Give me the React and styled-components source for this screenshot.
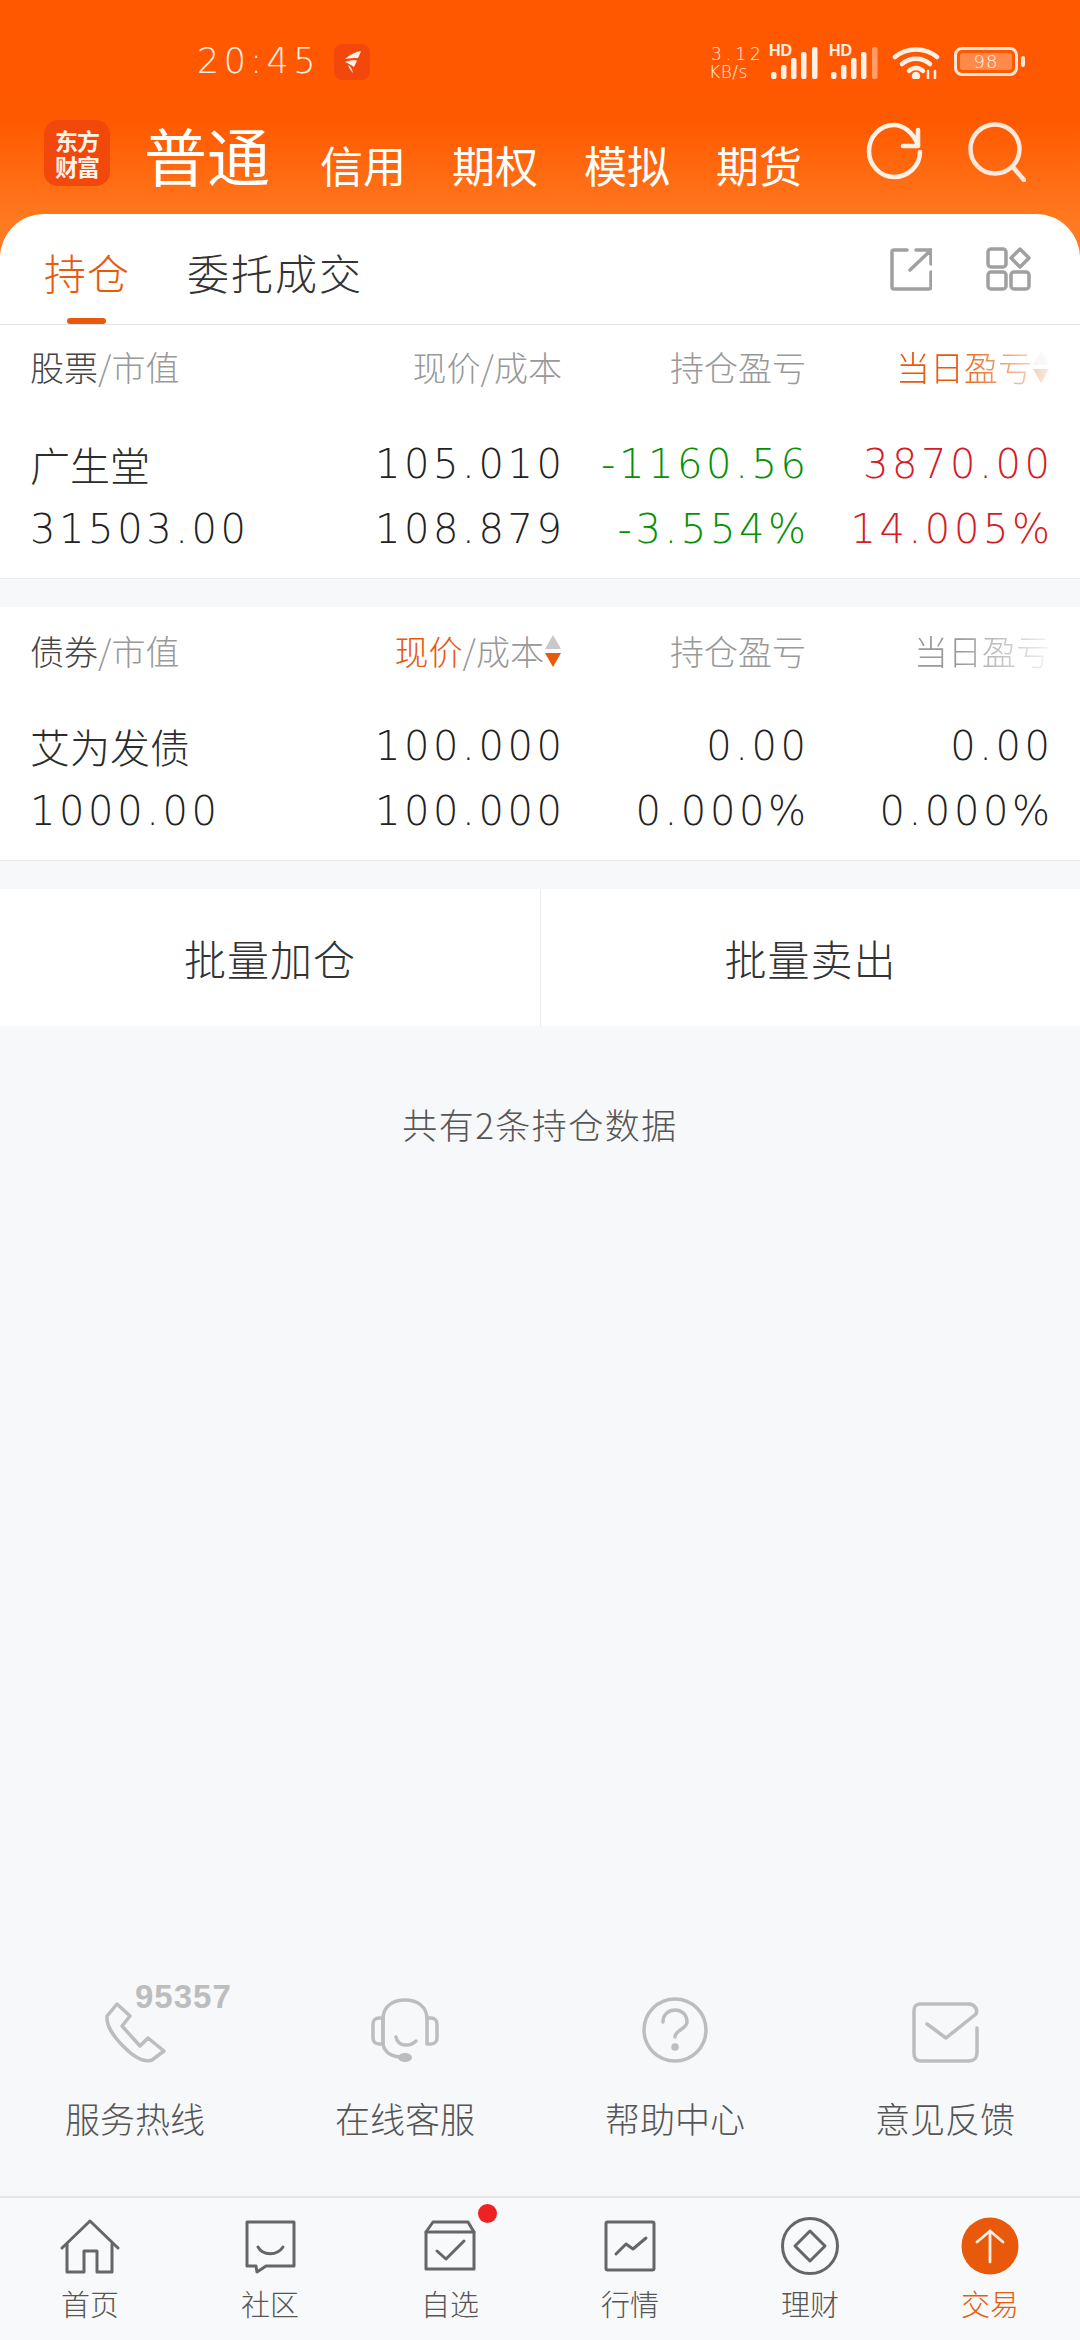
import React from 'react';
import styled, { createGlobalStyle } from 'styled-components';

const Global = createGlobalStyle`
  html, body { margin: 0; padding: 0; background: #f6f7f9; }
  body { font-family: "Noto Sans CJK SC", "Noto Sans", sans-serif; font-weight: 300; }
  * { box-sizing: border-box; }
`;

const NUM = '"DejaVu Sans", "Noto Sans CJK SC", sans-serif';

const Page = styled.div`
  width: 1080px; height: 2340px; display: flex; flex-direction: column; background: #f7f8fa; overflow: hidden;
`;
const Top = styled.div`
  background: linear-gradient(180deg, #ff5800 0, #ff5900 120px, #ff7a20 224px, #ff7a20 100%);
`;
const StatusBar = styled.div`
  height: 106px; display: flex; align-items: flex-start; padding: 44px 62px 0 197px; color: #fff0e6;
`;
const Clock = styled.div`
  font-family: ${NUM}; font-weight: 200; font-size: 35px; line-height: 34px; letter-spacing: 4.4px; width: 137px; white-space: nowrap;
`;
const AppDot = styled.div`
  width: 36px; height: 36px; border-radius: 8px; background: #f2480c; display: flex; align-items: center; justify-content: center;
`;
const StatusRight = styled.div`
  margin-left: auto; display: flex; align-items: flex-start;
`;
const Speed = styled.div`
  width: 60px; display: flex; flex-direction: column; font-family: ${NUM}; font-weight: 200; font-size: 17px; line-height: 18px; margin-top: 1px;
`;
const SpeedValue = styled.span`
  letter-spacing: 4px; padding-left: 2px; white-space: nowrap;
`;
const SpeedUnit = styled.span`
  letter-spacing: 0.5px;
`;
const Signal = styled.div`
  position: relative; width: 60px; height: 34px; margin-top: 2px;
`;
const Hd = styled.span`
  position: absolute; left: 0; top: -3px; font: 700 16px/16px "Liberation Sans", sans-serif; color: #fff0e6;
`;
const BarsSvg = styled.svg`
  position: absolute; left: 1px; top: 1px;
`;
const Wifi = styled.svg`
  margin: 3px 0 0 3px;
`;
const Battery = styled.div`
  margin-left: 14px; margin-top: 3px; width: 64px; height: 29px; border: 3px solid #ffe6d6; border-radius: 8px; padding: 3px; position: relative;
  &::after { content: ""; position: absolute; right: -10px; top: 6px; width: 4px; height: 11px; background: #ffe6d6; border-radius: 2px; }
`;
const BatteryFill = styled.div`
  height: 100%; background: #ff8a4a; border-radius: 3px; font-family: ${NUM}; font-weight: 200; font-size: 18px; line-height: 17px; letter-spacing: 1px; color: #fff0e6; text-align: center;
`;
const NavRow = styled.div`
  height: 108px; display: flex; align-items: flex-end; padding: 0 54px 24px 44px; position: relative; color: #fff;
`;
const Logo = styled.div`
  width: 66px; height: 66px; border-radius: 14px; background: #f2480c; color: #fff2e6; font-size: 23px; line-height: 26px; font-weight: 700;
  display: flex; align-items: center; justify-content: center; text-align: center; margin: 0 34px 4px 0; letter-spacing: -1px;
`;
const ModeMain = styled.div`
  font-size: 63px; line-height: 72px; width: 176px; font-weight: 400;
`;
const Mode = styled.div`
  font-size: 43px; line-height: 52px; width: ${p => p.$w || 132}px; font-weight: 400; white-space: nowrap;
`;
const NavIcons = styled.div`
  margin-left: auto; display: flex; gap: 44px; align-self: flex-start; margin-top: 16px;
`;
const TabBar = styled.div`
  height: 111px; background: #fff; border-radius: 44px 44px 0 0; border-bottom: 1px solid #e4e4e6; display: flex; padding: 30px 49px 0 44px; position: relative;
`;
const Tab = styled.div`
  font-size: 42px; line-height: 56px; letter-spacing: ${p => (p.$on ? 1 : 2)}px; color: ${p => (p.$on ? '#e8590c' : '#333')}; position: relative; margin-right: ${p => (p.$on ? '57px' : '0')};
  ${p => p.$on && `&::after { content: ""; position: absolute; left: 23px; top: 74px; width: 39px; height: 6px; border-radius: 3px; background: #e8590c; }`}
`;
const TabIcons = styled.div`
  margin-left: auto; display: flex; gap: 54px; padding-top: 3px; height: 44px;
`;
const Section = styled.section`
  background: #fff; border-bottom: 1px solid #ececee; padding: 0 30px; height: ${p => p.$h}px; margin-bottom: 28px;
`;
const Grid = styled.div`
  display: grid; grid-template-columns: 288px 244px 244px 244px; height: ${p => p.$h}px; align-items: center; margin-top: ${p => p.$mt || 0}px;
`;
const Head = styled.div`
  font-size: 34px; line-height: 44px; color: #999; display: flex; justify-content: ${p => (p.$left ? 'flex-start' : 'flex-end')}; align-items: center; white-space: nowrap;
  ${p => p.$fade && `-webkit-mask-image: linear-gradient(90deg, #000 62%, rgba(0,0,0,.12) 100%); mask-image: linear-gradient(90deg, #000 62%, rgba(0,0,0,.12) 100%);`}
`;
const Accent = styled.span`
  color: #e8590c;
`;
const Dark = styled.span`
  color: #444;
`;
const Name = styled.div`
  font-size: 40px; line-height: 50px; color: #2c2c2c; white-space: nowrap;
`;
const Cell = styled.div`
  font-family: ${NUM}; font-weight: 200; font-size: 40px; line-height: 50px; letter-spacing: 3.6px; color: ${p => p.$c || '#222'};
  text-align: ${p => (p.$left ? 'left' : 'right')}; margin-right: ${p => (p.$left ? 0 : -3.6)}px; white-space: nowrap;
`;
const Sort = styled.svg`
  width: 18px; height: 36px; flex: none;
`;
const Batch = styled.div`
  height: 137px; background: #fff; display: grid; grid-template-columns: 1fr 1fr;
`;
const BatchBtn = styled.div`
  display: flex; align-items: center; justify-content: center; font-size: 42px; letter-spacing: 1px; color: #333;
  & + & { border-left: 1px solid #ececee; }
`;
const Note = styled.div`
  text-align: center; font-size: 35px; line-height: 44px; letter-spacing: 1.500px; color: #555; margin-top: 76px;
`;
const Services = styled.div`
  margin-top: auto; display: grid; grid-template-columns: repeat(4, 270px); height: 233px; align-content: start;
`;
const Service = styled.div`
  display: flex; flex-direction: column; align-items: center; position: relative;
`;
const ServiceIcon = styled.div`
  height: 100px; display: flex; align-items: flex-end; justify-content: center; margin-bottom: 33px;
`;
const ServiceLabel = styled.div`
  font-size: 35px; line-height: 44px; color: #555;
`;
const HotNumber = styled.span`
  position: absolute; left: 135px; top: 17px; font: 700 33px/33px "Liberation Sans", sans-serif; color: #bdbdbd; letter-spacing: 1px;
`;
const BottomNav = styled.nav`
  height: 144px; border-top: 2px solid #e6e6e8; display: grid; grid-template-columns: repeat(6, 180px); background: #f8f9fb;
`;
const NavItem = styled.div`
  display: flex; flex-direction: column; align-items: center; padding-top: 17px; position: relative; color: ${p => (p.$on ? '#e8590c' : '#555')};
`;
const NavIconBox = styled.div`
  height: 62px; display: flex; align-items: center; justify-content: center;
`;
const NavLabel = styled.div`
  font-size: 29px; line-height: 36px; margin-top: 8px;
`;
const Badge = styled.span`
  position: absolute; left: 118px; top: 6px; width: 19px; height: 19px; border-radius: 50%; background: #ee2222;
`;

const Bars = ({ last = 1 }) => (
  <BarsSvg width="50" height="32" viewBox="0 0 50 32">
    {[[3, 25, 7], [13, 18, 14], [23, 11, 21], [33, 5, 27], [44, 0, 32]].map(([x, y, h], i) => (
      <rect key={i} x={x - 2} y={y} width="5.5" height={h} rx="2" fill="#fff0e6" opacity={i === 4 ? last : 1} />
    ))}
  </BarsSvg>
);
const SortIcon = ({ top = '#c8c8c8', bottom = '#e8590c' }) => (
  <Sort viewBox="0 0 18 36">
    <path d="M9 2 L17 16 H1 Z" fill={top} />
    <path d="M1 20 H17 L9 34 Z" fill={bottom} />
  </Sort>
);
const Ic = ({ w, h, sw = 3, c = '#666', children }) => (
  <svg width={w} height={h} viewBox={`0 0 ${w} ${h}`} fill="none" stroke={c} strokeWidth={sw} strokeLinecap="round" strokeLinejoin="round">{children}</svg>
);

export default function App() {
  return (
    <Page>
      <Global />
      <Top>
        <StatusBar>
          <Clock>20:45</Clock>
          <AppDot>
            <svg width="22" height="26" viewBox="0 0 22 26"><path d="M4 10C8 6 14 3 20 2 19 5 18 7 17 9 13 9 8 9 4 10ZM4 13C8 11 13 11 16 11.500 15 14 14 16 13 18 10 16 7 14 4 13ZM7 16C9 17 11 19 12 24 10 22 8 19 7 16Z" fill="#fff0e6" /></svg>
          </AppDot>
          <StatusRight>
            <Speed><SpeedValue>3.12</SpeedValue><SpeedUnit>KB/s</SpeedUnit></Speed>
            <Signal><Hd>HD</Hd><Bars /></Signal>
            <Signal><Hd>HD</Hd><Bars last={0.45} /></Signal>
            <Wifi width="48" height="32" viewBox="0 0 48 32" fill="none" stroke="#fff0e6" strokeWidth="4.5" strokeLinecap="round">
              <path d="M3 10C15 0 33 0 45 10" />
              <path d="M10 17C18 10 30 10 38 17" />
              <path d="M17 24C21 20 27 20 31 24" />
              <circle cx="24" cy="29" r="2" fill="#fff0e6" />
              <path d="M36 24V31M43 24V31" strokeWidth="2.5" />
            </Wifi>
            <Battery><BatteryFill>98</BatteryFill></Battery>
          </StatusRight>
        </StatusBar>
        <NavRow>
          <Logo>东方<br />财富</Logo>
          <ModeMain>普通</ModeMain>
          <Mode>信用</Mode>
          <Mode>期权</Mode>
          <Mode>模拟</Mode>
          <Mode $w={90}>期货</Mode>
          <NavIcons>
            <Ic w={58} h={58} c="#fff0e6" sw={4.5}>
              <path d="M52 8V24H37" />
              <path d="M52 23C47 10 37 3 28 3 14 3 3 15 3 29S14 55 28 55 54 44 54 30" />
            </Ic>
            <Ic w={58} h={60} c="#ffe8da" sw={4.5}>
              <circle cx="27" cy="27" r="24.5" />
              <path d="M45 45 56 58" />
            </Ic>
          </NavIcons>
        </NavRow>
        <TabBar>
          <Tab $on>持仓</Tab>
          <Tab>委托成交</Tab>
          <TabIcons>
            <Ic w={42} h={44} c="#a0a0a0" sw={3.5}>
              <path d="M17 3H4Q2 3 2 5V40Q2 42 4 42H39Q41 42 41 40V25" />
              <path d="M20 23 41 3M26 3H41V17" />
            </Ic>
            <Ic w={45} h={44} c="#a0a0a0" sw={3.5}>
              <rect x="2" y="2" width="18" height="18" rx="3" />
              <rect x="2" y="25" width="18" height="17" rx="3" />
              <rect x="25" y="25" width="18" height="17" rx="3" />
              <path d="M34 2 43 11 34 20 25 11Z" />
            </Ic>
          </TabIcons>
        </TabBar>
      </Top>
      <Section $h={254}>
        <Grid $h={84}>
          <Head $left><Dark>股票</Dark>/市值</Head>
          <Head>现价/成本</Head>
          <Head>持仓盈亏</Head>
          <Head $fade><Accent>当日盈亏</Accent><SortIcon top="#ddd" /></Head>
        </Grid>
        <Grid $h={50} $mt={30}>
          <Name>广生堂</Name>
          <Cell>105.010</Cell>
          <Cell $c="#069006">-1160.56</Cell>
          <Cell $c="#d41c26">3870.00</Cell>
        </Grid>
        <Grid $h={50} $mt={15}>
          <Cell $left>31503.00</Cell>
          <Cell>108.879</Cell>
          <Cell $c="#069006">-3.554%</Cell>
          <Cell $c="#d41c26">14.005%</Cell>
        </Grid>
      </Section>
      <Section $h={254}>
        <Grid $h={88}>
          <Head $left><Dark>债券</Dark>/市值</Head>
          <Head><Accent>现价</Accent>/成本<SortIcon /></Head>
          <Head>持仓盈亏</Head>
          <Head $fade>当日盈亏</Head>
        </Grid>
        <Grid $h={50} $mt={26}>
          <Name>艾为发债</Name>
          <Cell>100.000</Cell>
          <Cell>0.00</Cell>
          <Cell>0.00</Cell>
        </Grid>
        <Grid $h={50} $mt={15}>
          <Cell $left>1000.00</Cell>
          <Cell>100.000</Cell>
          <Cell>0.000%</Cell>
          <Cell>0.000%</Cell>
        </Grid>
      </Section>
      <Batch>
        <BatchBtn>批量加仓</BatchBtn>
        <BatchBtn>批量卖出</BatchBtn>
      </Batch>
      <Note>共有2条持仓数据</Note>
      <Services>
        <Service>
          <HotNumber>95357</HotNumber>
          <ServiceIcon>
            <Ic w={62} h={62} c="#bdbdbd" sw={3.5}>
              <path d="M13 3 26 15 18 25 36 45 44 37 60 50 48 59C40 62 30 56 20 46 10 36 2 26 3 15Z" />
            </Ic>
          </ServiceIcon>
          <ServiceLabel>服务热线</ServiceLabel>
        </Service>
        <Service>
          <ServiceIcon>
            <Ic w={70} h={66} c="#bdbdbd" sw={3.5}>
              <path d="M13 22C13 10 22 3 35 3S57 10 57 22" />
              <path d="M13 21H9C5 21 3 24 3 27V41C3 44 5 47 9 47H13ZM57 21H61C65 21 67 24 67 27V41C67 44 65 47 61 47H57Z" />
              <path d="M13 22V47C14 54 20 59 30 60" />
              <path d="M26 40C28 50 40 50 46 44" />
              <ellipse cx="35" cy="60.500" rx="7" ry="4.500" fill="#bdbdbd" stroke="none" />
            </Ic>
          </ServiceIcon>
          <ServiceLabel>在线客服</ServiceLabel>
        </Service>
        <Service>
          <ServiceIcon>
            <Ic w={66} h={66} c="#bdbdbd" sw={3.5}>
              <circle cx="33" cy="33" r="31" />
              <path d="M21 25C21 17 27 13 33 13S45 17 45 25C45 32 33 33 33 40" />
              <circle cx="33" cy="50" r="2" fill="#bdbdbd" />
            </Ic>
          </ServiceIcon>
          <ServiceLabel>帮助中心</ServiceLabel>
        </Service>
        <Service>
          <ServiceIcon>
            <Ic w={68} h={62} c="#bdbdbd" sw={3.5}>
              <path d="M66 27V52C66 57 63 60 58 60H10C5 60 3 57 3 52V10C3 5 5 3 10 3H58C64 3 67 9 65 13L35 37 16 23" />
            </Ic>
          </ServiceIcon>
          <ServiceLabel>意见反馈</ServiceLabel>
        </Service>
      </Services>
      <BottomNav>
        <NavItem>
          <NavIconBox>
            <Ic w={60} h={56} sw={3}>
              <path d="M2 30 30 3 58 30" />
              <path d="M7 26V54H24V33H37V54H52V26" />
            </Ic>
          </NavIconBox>
          <NavLabel>首页</NavLabel>
        </NavItem>
        <NavItem>
          <NavIconBox>
            <Ic w={55} h={55} sw={3}>
              <path d="M4 3H51V47H23L14 53 13 47H4Z" />
              <path d="M15 28C20 37 34 37 40 28" />
            </Ic>
          </NavIconBox>
          <NavLabel>社区</NavLabel>
        </NavItem>
        <NavItem>
          <Badge />
          <NavIconBox>
            <Ic w={52} h={52} sw={3}>
              <path d="M2 12 9 2H44L50 12V49H2Z" />
              <path d="M2 12H50" />
              <path d="M13 31 22 39 40 21" />
            </Ic>
          </NavIconBox>
          <NavLabel>自选</NavLabel>
        </NavItem>
        <NavItem>
          <NavIconBox>
            <Ic w={52} h={52} sw={3}>
              <rect x="2" y="2" width="48" height="48" rx="1.500" />
              <path d="M12 34 22 24 29 29 42 18" />
            </Ic>
          </NavIconBox>
          <NavLabel>行情</NavLabel>
        </NavItem>
        <NavItem>
          <NavIconBox>
            <Ic w={58} h={58} sw={3}>
              <circle cx="29" cy="29" r="27.500" />
              <path d="M29 14 44 29 29 44 14 29Z" />
            </Ic>
          </NavIconBox>
          <NavLabel>理财</NavLabel>
        </NavItem>
        <NavItem $on>
          <NavIconBox>
            <svg width="58" height="58" viewBox="0 0 58 58">
              <circle cx="29" cy="29" r="28.500" fill="#e8590c" />
              <path d="M29 45V14M16 25 29 14 42 25" fill="none" stroke="#ffeee2" strokeWidth="2.800" strokeLinecap="round" strokeLinejoin="round" />
            </svg>
          </NavIconBox>
          <NavLabel>交易</NavLabel>
        </NavItem>
      </BottomNav>
    </Page>
  );
}
